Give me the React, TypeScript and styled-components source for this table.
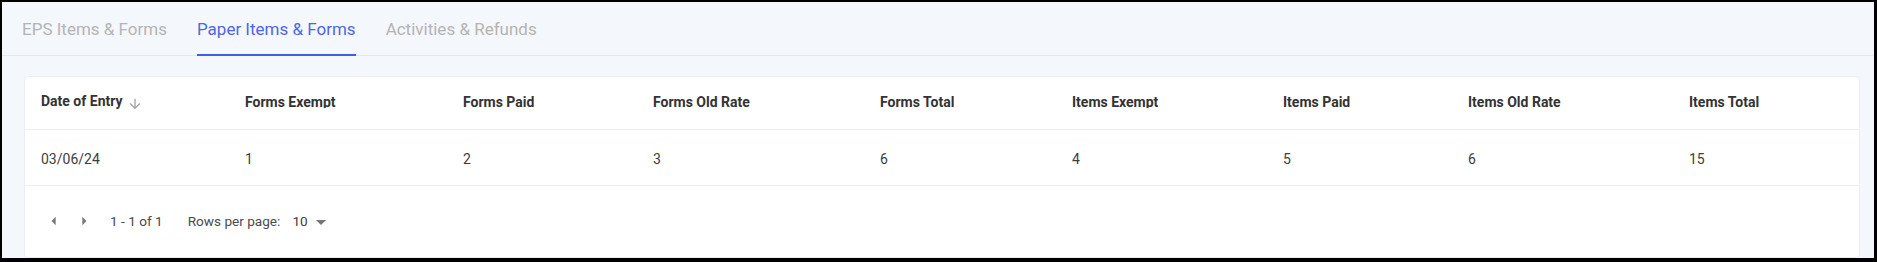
import React from "react";
import styled, { createGlobalStyle } from "styled-components";

const GlobalStyle = createGlobalStyle`
  html, body {
    margin: 0;
    padding: 0;
    background: #000;
    height: 262px;
    overflow: hidden;
  }
  body {
    font-family: Roboto, "Liberation Sans", Arial, sans-serif;
  }
  * { box-sizing: border-box; }
`;

const Frame = styled.div`
  margin: 2px 3px 0 2px;
  height: 256px;
  overflow: hidden;
  background: #f4f7fc;
  display: flex;
  flex-direction: column;
`;

const TabBar = styled.div`
  display: flex;
  gap: 30px;
  height: 54px;
  padding-left: 20px;
  box-shadow: inset 0 -1px 0 #e3e8ef;
`;

const Tab = styled.div<{ $active?: boolean }>`
  display: flex;
  align-items: center;
  height: 54px;
  font-size: 17px;
  font-weight: 400;
  color: ${(p) => (p.$active ? "#5065e8" : "#b4b4b4")};
  border-bottom: 2px solid ${(p) => (p.$active ? "#3f5fe6" : "transparent")};
  padding-top: 2px;
  white-space: nowrap;
`;

const Card = styled.div`
  margin: 20px 14px 0 22px;
  background: #fff;
  border: 1px solid #e9eef5;
  border-radius: 4px;
  display: flex;
  flex-direction: column;
  flex-shrink: 0;
`;

const COLS = "204px 218px 190px 227px 192px 211px 185px 221px 1fr";

const HeaderRow = styled.div`
  display: grid;
  grid-template-columns: ${COLS};
  height: 53px;
  border-bottom: 1px solid #e9eef5;
`;

const BodyRow = styled.div`
  display: grid;
  grid-template-columns: ${COLS};
  height: 56px;
  border-bottom: 1px solid #e9eef5;
  align-items: center;
`;

const HeadCell = styled.div`
  display: flex;
  align-items: center;
  height: 100%;
  padding-left: 16px;
  padding-bottom: 4px;
  font-size: 14px;
  font-weight: 700;
  color: #333333;
`;

const HeadLabel = styled.span<{ $clip?: boolean }>`
  display: block;
  line-height: 16px;
  height: ${(p) => (p.$clip ? "14px" : "16px")};
  overflow: hidden;
  white-space: nowrap;
`;

const SortIcon = styled.svg`
  width: 16px;
  height: 16px;
  margin-left: 4px;
  margin-top: 6px;
  fill: #a3a3a3;
`;

const Cell = styled.div`
  padding-left: 16px;
  padding-top: 2px;
  font-size: 14px;
  color: #3d3d3d;
  white-space: nowrap;
`;

const Pagination = styled.div`
  display: flex;
  align-items: center;
  height: 71px;
  padding-left: 19px;
  padding-bottom: 1px;
  font-size: 13.6px;
  color: #4a4a4a;
`;

const NavButtons = styled.div`
  display: flex;
  gap: 10px;
  margin-right: 16px;
`;

const NavIcon = styled.svg`
  width: 20px;
  height: 20px;
  fill: #7a7a7a;
`;

const RangeText = styled.span`
  margin-right: 25px;
`;

const RowsLabel = styled.span`
  margin-right: 12px;
`;

const RowsSelect = styled.div`
  display: flex;
  align-items: center;
  gap: 1px;
  color: #3d3d3d;
`;

const DropIcon = styled.svg`
  width: 24px;
  height: 24px;
  fill: #757575;
  margin-top: 1px;
`;

const headers = [
  "Forms Exempt",
  "Forms Paid",
  "Forms Old Rate",
  "Forms Total",
  "Items Exempt",
  "Items Paid",
  "Items Old Rate",
  "Items Total",
];

const row = ["03/06/24", "1", "2", "3", "6", "4", "5", "6", "15"];

export default function App() {
  return (
    <>
      <GlobalStyle />
      <Frame>
        <TabBar>
          <Tab>EPS Items &amp; Forms</Tab>
          <Tab $active>Paper Items &amp; Forms</Tab>
          <Tab>Activities &amp; Refunds</Tab>
        </TabBar>
        <Card>
          <HeaderRow>
            <HeadCell>
              <HeadLabel>Date of Entry</HeadLabel>
              <SortIcon viewBox="0 0 24 24">
                <path d="M20 12l-1.41-1.41L13 16.17V4h-2v12.17l-5.58-5.59L4 12l8 8 8-8z" />
              </SortIcon>
            </HeadCell>
            {headers.map((h) => (
              <HeadCell key={h}>
                <HeadLabel $clip>{h}</HeadLabel>
              </HeadCell>
            ))}
          </HeaderRow>
          <BodyRow>
            {row.map((v, i) => (
              <Cell key={i}>{v}</Cell>
            ))}
          </BodyRow>
          <Pagination>
            <NavButtons>
              <NavIcon viewBox="0 0 24 24">
                <path d="M14 7l-5 5 5 5V7z" />
              </NavIcon>
              <NavIcon viewBox="0 0 24 24">
                <path d="M10 17l5-5-5-5v10z" />
              </NavIcon>
            </NavButtons>
            <RangeText>1 - 1 of 1</RangeText>
            <RowsLabel>Rows per page:</RowsLabel>
            <RowsSelect>
              <span>10</span>
              <DropIcon viewBox="0 0 24 24">
                <path d="M7 10l5 5 5-5z" />
              </DropIcon>
            </RowsSelect>
          </Pagination>
        </Card>
      </Frame>
    </>
  );
}
